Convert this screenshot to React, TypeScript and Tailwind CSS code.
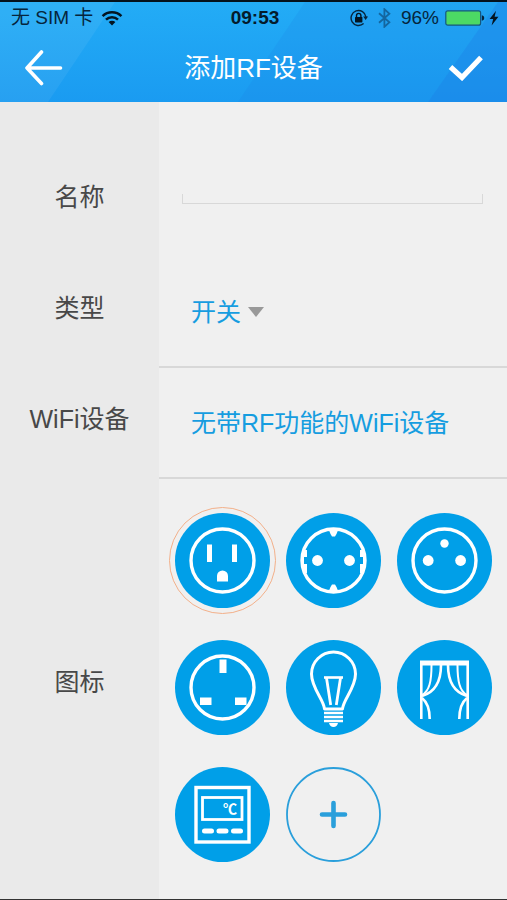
import { useState } from "react";
import type { ReactNode } from "react";

const BLUE = "#009fe8";

function HeaderBackdrop() {
  return (
    <svg className="absolute inset-0 -z-10 h-full w-full" viewBox="0 0 507 102" preserveAspectRatio="none" aria-hidden="true">
      <defs>
        <linearGradient id="sky" x1="0" y1="0" x2="0" y2="1">
          <stop offset="0" stopColor="#23acf6" />
          <stop offset="1" stopColor="#1a9bf1" />
        </linearGradient>
      </defs>
      <rect width="507" height="102" fill="url(#sky)" />
      <polygon points="0,0 115,0 48,102 0,102" fill="#fff" fillOpacity="0.06" />
      <polygon points="305,0 507,0 507,102 238,102" fill="#1c7fe4" fillOpacity="0.18" />
      <polygon points="498,0 507,0 507,102 428,102" fill="#1c7fe4" fillOpacity="0.35" />
    </svg>
  );
}

function StatusBar() {
  return (
    <div className="grid h-8 grid-cols-[1fr_auto_1fr] items-center pr-2 pl-[11px] text-[#06253c]">
      <div className="flex items-center gap-2 text-[19px] leading-6">
        <span>无 SIM 卡</span>
        <svg width="22" height="16" viewBox="0 0 22 16" aria-label="Wi-Fi">
          <g fill="none" stroke="#041521" strokeWidth="2.5">
            <path d="M1.6 6.2a13.4 13.4 0 0 1 18.8 0" />
            <path d="M5 9.6a8.600 8.600 0 0 1 12 0" />
          </g>
          <path d="M11 15.4 7.6 12a4.900 4.900 0 0 1 6.800 0z" fill="#041521" />
        </svg>
      </div>
      <time className="text-[19px] leading-6 font-bold text-[#041b2c]">09:53</time>
      <div className="flex items-center justify-end text-[19px] leading-6">
        <svg className="mr-2.5" width="18" height="18" viewBox="0 0 18 18" aria-label="方向锁定">
          <path d="M13.6 14.6A7.5 7.5 0 1 1 16 8" fill="none" stroke="#06253c" strokeWidth="1.4" />
          <path d="M13.2 7.6h4.8l-2.4 3.4z" fill="#06253c" />
          <rect x="5" y="8" width="7.4" height="5.4" rx="0.6" fill="#041521" />
          <path d="M6.5 8.4V6.6a2.2 2.2 0 0 1 4.4 0v1.8" fill="none" stroke="#041521" strokeWidth="1.4" />
        </svg>
        <svg className="mr-2.5" width="13" height="20" viewBox="0 0 13 20" aria-label="蓝牙">
          <path d="M1 5.2l10.4 9L6.4 18.8V1.2l5 4.6L1 14.8" fill="none" stroke="#14669f" strokeWidth="1.8" />
        </svg>
        <span>96%</span>
        <svg className="ml-1.5" width="40" height="16" viewBox="0 0 40 16" aria-label="电池">
          <rect x="0.8" y="0.8" width="34.8" height="14.4" rx="2" fill="#4cd964" stroke="#15567f" strokeWidth="1.2" />
          <path d="M36.8 5.2c1.8.4 2.4 1.5 2.4 2.8s-.6 2.4-2.4 2.8z" fill="#06253c" />
        </svg>
        <svg className="ml-1" width="10" height="16" viewBox="0 0 10 16" aria-label="正在充电">
          <path d="M7 0.8 0.6 9h3.6L2.6 15.4 9.4 6.8H5.6z" fill="#041521" />
        </svg>
      </div>
    </div>
  );
}

function Header() {
  return (
    <header className="relative isolate border-t-2 border-[#04121d]">
      <HeaderBackdrop />
      <StatusBar />
      <div className="flex h-[68px] items-center justify-between pr-6 pl-6 text-white">
        <button type="button" aria-label="返回">
          <svg width="40" height="36" viewBox="0 0 40 36" fill="none" stroke="#fff" strokeWidth="3.6" strokeLinecap="round" strokeLinejoin="round">
            <path d="M17.5 2 3 18l14.5 15.5M3 18h33.5" />
          </svg>
        </button>
        <h1 className="text-[26px] leading-8">添加RF设备</h1>
        <button type="button" aria-label="完成" className="flex w-10 justify-end">
          <svg width="36" height="26" viewBox="0 0 36 26" fill="none" stroke="#fff" strokeWidth="5.2">
            <path d="M3.5 12 15 22.5 34 2.5" />
          </svg>
        </button>
      </div>
    </header>
  );
}

const outline = <circle cx="47.5" cy="47.5" r="31.5" fill="none" stroke="#fff" strokeWidth="3.4" />;

const usSocket = (
  <>
    {outline}
    <path d="M32 31.5h5V49h-5zM57 31.5h5V49h-5zM42 68.5V63a5.5 5.5 0 0 1 11 0v5.5z" fill="#fff" />
  </>
);

const euSocket = (
  <>
    {outline}
    <circle cx="31.5" cy="47.5" r="5.4" fill="#fff" />
    <circle cx="63.5" cy="47.5" r="5.4" fill="#fff" />
    <path
      d="M42.500 16h10L50.500 21 49 23.500h-3L44.500 21zM42.500 79h10L50.500 74 49 71.500h-3L44.500 74zM17 37h4v7h-3v7h3v9h-4zM78 37h-4v7h3v7h-3v9h4z"
      fill="#fff"
    />
  </>
);

const threeHoleSocket = (
  <>
    {outline}
    <circle cx="47.5" cy="30.5" r="4.2" fill="#fff" />
    <circle cx="31.2" cy="47.5" r="5.4" fill="#fff" />
    <circle cx="63.6" cy="47.5" r="5.4" fill="#fff" />
  </>
);

const ukSocket = (
  <>
    {outline}
    <path d="M44.5 19.5h7V33h-7zM25 57.5h11.5V65H25zM60 57.5h11.5V65H60z" fill="#fff" />
  </>
);

const bulb = (
  <g fill="none" stroke="#fff" strokeWidth="3">
    <path d="M38.5 69C38 60 25.500 48 25.500 34a22 22 0 0 1 44 0C69.500 48 57 60 56.500 69z" strokeLinejoin="round" />
    <path d="M38 37.5h19" strokeWidth="2.6" />
    <path d="M40.5 38l4.2 27M54.5 38l-4.200 27" strokeWidth="2.8" />
    <path d="M38 73h19M38 77h19M38 81h19" strokeWidth="2.4" />
    <path d="M43 83h9c-.6 2.800-2.200 4-4.500 4S43.600 85.800 43 83z" fill="#fff" stroke="none" />
  </g>
);

const curtain = (
  <g fill="none" stroke="#fff" strokeWidth="2.6">
    <path d="M23 23h49" strokeWidth="5" />
    <path d="M24.300 22v57M70.700 22v57" />
    <path d="M44 25c0 16-5.500 27-19 31M51 25c0 16 5.500 27 19 31" />
    <path d="M34.500 25c0 16-2 26-9.500 30M60.500 25c0 16 2 26 9.500 30" strokeWidth="2" />
    <path d="M25 58c5 4 7.700 11 7.700 21M70 58c-5 4-7.700 11-7.700 21" />
  </g>
);

const thermostat = (
  <g fill="none" stroke="#fff">
    <rect x="21" y="20.5" width="53" height="54.5" strokeWidth="3.4" />
    <rect x="27.5" y="30.5" width="39.5" height="22" strokeWidth="2.8" />
    <path d="M29.500 64h7M44 64h7M58.500 64h7" strokeWidth="5" strokeLinecap="round" />
    <text x="48" y="47" fontSize="14" fontWeight="bold" fill="#fff" stroke="none">
      ℃
    </text>
  </g>
);

const icons: { id: string; name: string; art: ReactNode }[] = [
  { id: "us", name: "美标插座", art: usSocket },
  { id: "eu", name: "欧标插座", art: euSocket },
  { id: "three", name: "三孔插座", art: threeHoleSocket },
  { id: "uk", name: "英标插座", art: ukSocket },
  { id: "bulb", name: "灯泡", art: bulb },
  { id: "curtain", name: "窗帘", art: curtain },
  { id: "thermostat", name: "温控器", art: thermostat },
];

function IconPicker() {
  const [selected, setSelected] = useState("us");
  return (
    <div role="radiogroup" aria-labelledby="icon-label" className="grid flex-1 grid-cols-[repeat(3,95px)] content-start justify-between gap-y-8 pt-[34px] pr-[15px] pb-8 pl-4">
      {icons.map((icon) => (
        <label key={icon.id} className="relative block size-[95px]">
          <input
            type="radio"
            name="icon"
            value={icon.id}
            aria-label={icon.name}
            checked={selected === icon.id}
            onChange={() => setSelected(icon.id)}
            className="peer sr-only"
          />
          <svg className="block size-full" viewBox="0 0 95 95" aria-hidden="true">
            <circle cx="47.5" cy="47.5" r="47.5" fill={BLUE} />
            {icon.art}
          </svg>
          <span className="absolute -inset-1.5 hidden rounded-full border border-[#f3b08a] peer-checked:block" />
        </label>
      ))}
      <button type="button" aria-label="添加图标" className="size-[95px]">
        <svg className="block size-full" viewBox="0 0 95 95" fill="none" stroke="#2a9fdb" aria-hidden="true">
          <circle cx="47.5" cy="47.5" r="46.5" strokeWidth="1.8" />
          <path d="M36 47.5h23M47.5 36v23" strokeWidth="4.6" strokeLinecap="round" />
        </svg>
      </button>
    </div>
  );
}

const labelCell = "flex w-[159px] shrink-0 items-center justify-center bg-[#eaeaea] pb-2.5 text-[#484848]";

export default function App() {
  return (
    <div className="flex min-h-screen flex-col border-b border-[#333] bg-[#f0f0f0] font-['Liberation_Sans','Noto_Sans_CJK_SC',sans-serif]">
      <Header />
      <form className="flex flex-1 flex-col text-[25px] leading-8" onSubmit={(e) => e.preventDefault()}>
        <div className="flex">
          <div className="h-11 w-[159px] bg-[#eaeaea]" />
        </div>
        <div className="flex h-[111px]">
          <label htmlFor="name" className={labelCell}>
            名称
          </label>
          <div className="flex flex-1 flex-col pt-3 pr-6 pl-[23px]">
            <input id="name" type="text" className="h-9 w-full bg-transparent px-2 text-[#009fe8] outline-none" />
            <div className="h-2.5 border-x border-b border-[#d8d8d8]" />
          </div>
        </div>
        <div className="flex h-[111px]">
          <label htmlFor="type" className={labelCell}>
            类型
          </label>
          <div className="flex flex-1 items-center border-b-2 border-[#d8d8d8] pl-8">
            <select id="type" className="w-[50px] appearance-none bg-transparent text-[#169de0] outline-none">
              <option>开关</option>
              <option>灯光</option>
              <option>窗帘</option>
            </select>
            <svg className="ml-[7px]" width="16" height="10" viewBox="0 0 16 10" aria-hidden="true">
              <path d="M0 0h16L8 10z" fill="#999" />
            </svg>
          </div>
        </div>
        <div className="flex h-[111px]">
          <label htmlFor="wifi" className={labelCell}>
            WiFi设备
          </label>
          <div className="flex flex-1 items-center border-b-2 border-[#d8d8d8] pl-8">
            <button id="wifi" type="button" className="text-[#169de0]">
              无带RF功能的WiFi设备
            </button>
          </div>
        </div>
        <div className="flex flex-1">
          <div id="icon-label" className="flex w-[159px] shrink-0 items-center justify-center bg-[#eaeaea] pb-3.5 text-[#484848]">
            图标
          </div>
          <IconPicker />
        </div>
      </form>
    </div>
  );
}
